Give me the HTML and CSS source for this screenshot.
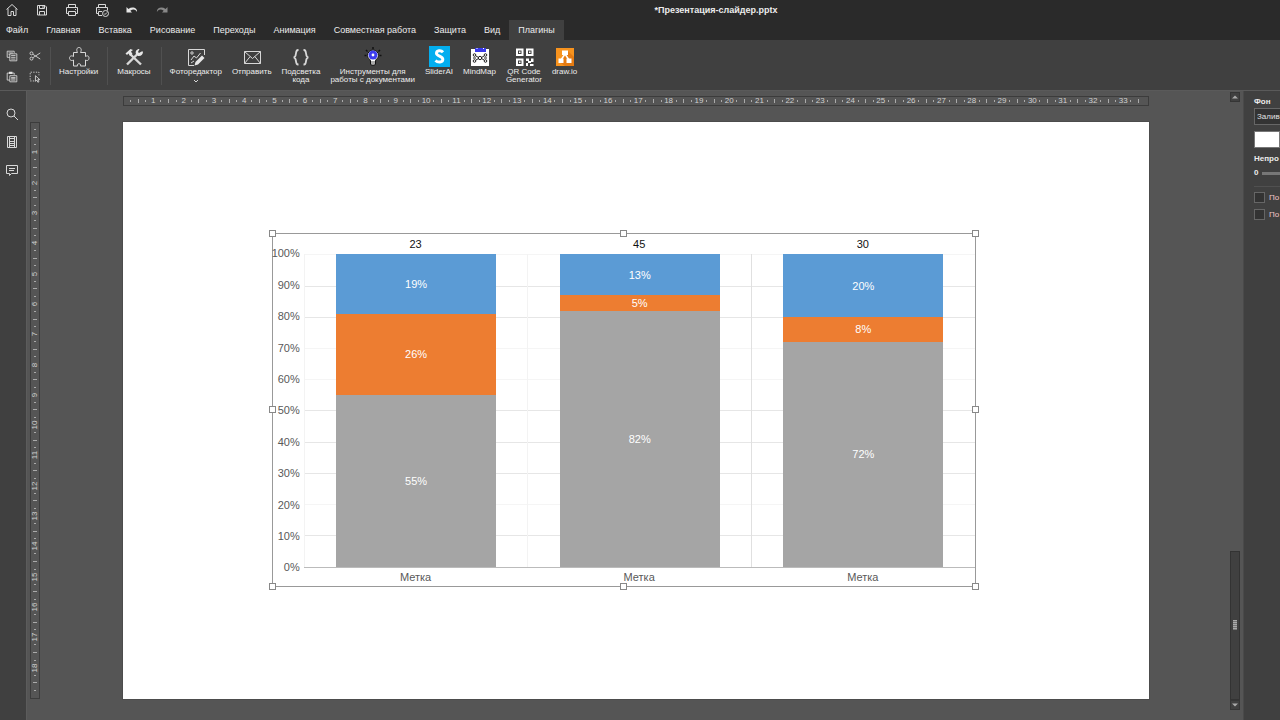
FILE: index.html
```html
<!DOCTYPE html>
<html lang="ru">
<head>
<meta charset="utf-8">
<title>Презентация-слайдер.pptx</title>
<link rel="stylesheet" href="styles.css">
</head>
<body>
<header class="titlebar">
  <div class="quick">
    <button aria-label="Домой"><svg viewBox="0 0 16 16"><path d="M2.5 7.5 8 2.5l5.500 5M4 6.500V13.500h3V9.500h2.500v4H12V6.500"/></svg></button>
    <button aria-label="Сохранить"><svg viewBox="0 0 16 16"><path d="M3.500 3.500h7.500l1.500 1.500v8h-9zM5.500 3.500v3h5v-3M5.500 13V9.500h5V13M9 4v2"/></svg></button>
    <button aria-label="Печать"><svg viewBox="0 0 16 16"><path d="M4.500 5.500v-3h7v3M4.500 11.500h-2v-6h11v6h-2M4.500 9.500h7v4h-7zM11 7.500h1"/></svg></button>
    <button aria-label="Быстрая печать"><svg viewBox="0 0 16 16"><path d="M4.500 5.500v-3h7v3M4.500 11.500h-2v-6h11v3M8 9.500H4.500v4H8M4.500 7.500h1"/><circle cx="11.500" cy="11.500" r="3"/><path d="m10 11.500 1 1 2-2"/></svg></button>
    <button aria-label="Отменить"><svg viewBox="0 0 16 16"><path class="solid" d="M2.500 5v5.500H8L6.300 8.700C9 6.700 12 7.200 13 10c.8-4-4.500-6-8.600-3.100z"/></svg></button>
    <button aria-label="Повторить" class="muted"><svg viewBox="0 0 16 16"><path class="solid" d="M13.500 5v5.500H8l1.700-1.800C7 6.700 4 7.200 3 10c-.8-4 4.500-6 8.600-3.100z"/></svg></button>
  </div>
  <h1>*Презентация-слайдер.pptx</h1>
</header>
<nav class="tabs">
  <button>Файл</button><button>Главная</button><button>Вставка</button><button>Рисование</button><button>Переходы</button><button>Анимация</button><button>Совместная работа</button><button>Защита</button><button>Вид</button><button class="active">Плагины</button>
</nav>
<section class="toolbar">
  <div class="clip">
    <button aria-label="Копировать"><svg viewBox="0 0 16 16"><path d="M5.500 9.500h-3v-7h8v2M4 4.500h5M4 6.500h1.500M5.500 5.500h8v8h-8zM7 7.500h5M7 9.500h5M7 11.500h5"/></svg></button>
    <button aria-label="Вырезать"><svg viewBox="0 0 16 16"><circle cx="4" cy="5" r="1.700"/><circle cx="4" cy="11" r="1.700"/><path d="M5.500 6 14 11.500M5.500 10 14 4.500"/></svg></button>
    <button aria-label="Вставить"><svg viewBox="0 0 16 16"><path d="M5.500 11.500h-3v-8h8v2M5 3h3M5.500 6.500h8v7h-8zM7 8.500h5M7 10h5M7 11.500h5"/><path class="solid" d="M4.500 2h4v2.500h-4z"/></svg></button>
    <button aria-label="Выделить"><svg viewBox="0 0 16 16"><path stroke-dasharray="1.500 1.500" d="M7 12.500H2.500v-10h10V6"/><path d="M8.500 6.500v6.500l1.500-1.500 1.300 2.500 1.200-.6-1.300-2.400h2.300z"/></svg></button>
  </div>
  <div class="group">
    <button class="tool"><svg class="ico" viewBox="0 0 22 22"><path d="M5.500 6.500h4C8 3.500 9 1.500 11 1.500s3 2 1.500 5h5v4c2.500-1.500 3.500 0 3.500 1.500s-1 3.500-3.500 2v6h-5c1.500-3-4.500-3-3 0h-4v-6c-2.500 1.500-4-.5-4-2s1.500-3 4-1.500v-4z"/></svg><span>Настройки</span></button>
  </div>
  <div class="group wide">
    <button class="tool"><svg class="ico" viewBox="0 0 22 22"><path stroke-width="2.400" d="M4 18.500 14.500 8M7 8l11 10.500"/><path class="solid" d="M2.500 7.500 7.500 3l2.500 1-2 1.500 1.500 2.500L7 10 5.500 7.500 4 9zM18.500 5.500l-2.500 1.500-1-1 1.500-3c-3 0-4.500 2.500-3.500 5l2 2c3 .5 5.200-1.500 5-4.500z"/></svg><span>Макросы</span></button>
  </div>
  <div class="group">
    <button class="tool"><svg class="ico" viewBox="0 0 22 22"><path d="M9 19.500H3.500v-16h16V9M6 14l3-4 2.500 2 4-5M6 17l3-2"/><circle cx="7" cy="7" r="1.200"/><path class="solid" d="m9.500 19.500 1-3.500 6.500-6.500 2.500 2.500-6.500 6.500z"/></svg><span>Фоторедактор</span><svg class="caret" viewBox="0 0 6 6"><path d="m1 2 2 2 2-2"/></svg></button>
    <button class="tool"><svg class="ico" viewBox="0 0 22 22"><path d="M3.500 5.500h16v12h-16zM3.500 5.500l8 7 8-7M3.500 17.500l5.700-7M19.500 17.500l-5.700-7"/></svg><span>Отправить</span></button>
    <button class="tool"><svg class="ico" viewBox="0 0 22 22"><path stroke-width="1.800" d="M8.500 4H8C4.500 4 7.500 11.300 3.500 11.300 7.500 11.300 4.500 18.500 8 18.500h.5M13.500 4h.5c3.500 0 .5 7.300 4.500 7.300-4 0-1 7.200-4.500 7.200h-.5"/></svg><span>Подсветка<br>кода</span></button>
    <button class="tool"><svg class="ico" viewBox="0 0 22 22"><path stroke="#111" stroke-width="1.500" d="M11 1v2M4 4l1.500 1.500M18 4l-1.500 1.500M2.500 9.500h2M17.500 9.500h2"/><path fill="#fff" stroke="#111" d="M8.500 15c0-1.800-3-2.500-3-5.500a5.500 5.500 0 0 1 11 0c0 3-3 3.700-3 5.500v3.500l-2.500 1-2.500-1z"/><circle cx="11" cy="9" r="4.500" fill="#3c3cf0" stroke="none"/><circle cx="11" cy="9" r="1.400" fill="#fff" stroke="none"/><path stroke="#555" d="M9 16h4M9 18h4"/></svg><span>Инструменты для<br>работы с документами</span></button>
    <button class="tool"><svg class="ico" viewBox="0 0 22 22"><path fill="#03aeef" stroke="none" d="M1 0h21v21H1z"/><path stroke="#fff" stroke-width="3" d="M15 6.200C13 4 8.500 4.300 8.500 7.300c0 3.200 6.300 2.500 6.300 6 0 3.500-5 3.500-7.300 1.200"/></svg><span>SliderAI</span></button>
    <button class="tool"><svg class="ico" viewBox="0 0 22 22"><path fill="#fff" stroke="none" d="M3 3h18v17H3z"/><path fill="#3939e8" stroke="none" d="M7 2h11v4H7z"/><path fill="#fff" stroke="none" d="M8.500 2h1v1h-1zM15 2h1v1h-1z"/><g stroke="#222"><circle cx="12" cy="12" r="1.700"/><circle cx="6.500" cy="9" r="1.300"/><circle cx="6.500" cy="15" r="1.300"/><circle cx="17.500" cy="9" r="1.300"/><circle cx="17.500" cy="15" r="1.300"/><path d="m8 10 2.500 1.500M8 14l2.500-1.500M16 10l-2.500 1.500M16 14l-2.500-1.500M5 12h3M16 12h3"/></g></svg><span>MindMap</span></button>
    <button class="tool"><svg class="ico" viewBox="0 0 22 22"><path stroke="#fff" stroke-width="2" d="M4 3.500h5.500V9H4zM14 3.500h5.500V9H14zM4 13.500h5.500V19H4z"/><path fill="#fff" stroke="none" d="M6 5.500h1.500V7H6zM16 5.500h1.500V7H16zM6 15.500h1.500V17H6zM13 12.500h3V15h-3zM18 12.500h2.500V16H18zM15 15h3v2h-3zM13 17h2v3h-2zM17 18h3.500v2H17z"/></svg><span>QR Code<br>Generator</span></button>
    <button class="tool"><svg class="ico" viewBox="0 0 22 22"><path fill="#f7931e" stroke="none" d="M2 2h18v18H2z"/><path fill="#e57b12" stroke="none" d="m14 5 6 6v9h-9l-6-4z"/><path stroke="#fff" stroke-width="1.500" d="m11 8-4 6M11 8l4 6"/><path fill="#fff" stroke="none" d="M8 4.500h6V9H8zM4.500 12.500h5V17h-5zM12.500 12.500h5V17h-5z"/></svg><span>draw.io</span></button>
  </div>
</section>
<main class="main">
  <aside class="leftbar">
    <button aria-label="Поиск"><svg viewBox="0 0 16 16"><circle cx="7" cy="7" r="4"/><path d="m10 10 4 4"/></svg></button>
    <button aria-label="Слайды"><svg viewBox="0 0 16 16"><path d="M3.500 2.500h9v11h-9zM5.500 3v10M10.500 3v10M5.500 4.500h5v3h-5zM5.500 9.500h5v2h-5z"/></svg></button>
    <button aria-label="Комментарии"><svg viewBox="0 0 16 16"><path d="M2.500 3.500h11v8h-6l-2 2v-2h-3zM5 6.500h6M5 8.500h5"/></svg></button>
  </aside>
  <section class="workspace">
    <div class="ruler ruler-h" data-steps="135"></div>
    <div class="ruler ruler-v" data-steps="76"></div>
    <div class="slide">
      <figure class="chart">
        <div class="yaxis"><span>100%</span><span>90%</span><span>80%</span><span>70%</span><span>60%</span><span>50%</span><span>40%</span><span>30%</span><span>20%</span><span>10%</span><span>0%</span></div>
        <div class="totals"><span>23</span><span>45</span><span>30</span></div>
        <div class="plot">
          <div class="lines"><i class="faint"></i><i></i><i></i><i class="faint"></i><i class="faint"></i><i></i><i></i><i></i><i class="faint"></i><i></i></div>
          <div class="col"><div class="bar"><div class="blue" style="height:19%">19%</div><div class="orange" style="height:26%">26%</div><div class="gray" style="height:55%">55%</div></div></div>
          <div class="col"><div class="bar"><div class="blue" style="height:13%">13%</div><div class="orange" style="height:5%">5%</div><div class="gray" style="height:82%">82%</div></div></div>
          <div class="col strong"><div class="bar"><div class="blue" style="height:20%">20%</div><div class="orange" style="height:8%">8%</div><div class="gray" style="height:72%">72%</div></div></div>
        </div>
        <div class="cats"><span>Метка</span><span>Метка</span><span>Метка</span></div>
        <b class="h n w"></b><b class="h n c"></b><b class="h n e"></b><b class="h m w"></b><b class="h m e"></b><b class="h s w"></b><b class="h s c"></b><b class="h s e"></b>
      </figure>
    </div>
    <div class="scroll">
      <button aria-label="Вверх"><svg viewBox="0 0 8 8"><path d="M1 5.500h6L4 2.500z"/></svg></button>
      <div class="track"><div class="thumb"><i></i></div></div>
      <button aria-label="Вниз"><svg viewBox="0 0 8 8"><path d="M1 2.500h6L4 5.500z"/></svg></button>
    </div>
  </section>
  <aside class="props">
    <label class="head" for="fill">Фон</label>
    <select id="fill"><option>Залив</option></select>
    <button class="swatch" aria-label="Цвет"></button>
    <label class="head" for="opacity">Непро</label>
    <div class="range"><span>0</span><input id="opacity" type="range" value="100"></div>
    <hr>
    <label class="check"><input type="checkbox">По</label>
    <label class="check"><input type="checkbox">По</label>
  </aside>
</main>
<script src="rulers.js"></script>
</body>
</html>
```

FILE: styles.css
```css
* { box-sizing: border-box; }
body {
  margin: 0;
  height: 100vh;
  display: flex;
  flex-direction: column;
  overflow: hidden;
  background: #555;
  color: #ececec;
  font: 9px/10px "Liberation Sans", Arial, sans-serif;
}
button { border: 0; padding: 0; background: none; color: inherit; font: inherit; }
svg { display: block; width: 16px; height: 16px; fill: none; stroke: #d8d8d8; stroke-width: 1; }
.solid { fill: #e6e6e6; stroke: none; }

.titlebar { display: flex; align-items: center; height: 20px; flex: none; background: #2a2a2a; padding-right: 18px; }
.quick { display: flex; gap: 14px; padding-left: 4px; }
.muted { opacity: .5; }
.titlebar h1 { flex: 1; margin: 0; text-align: center; font-size: 9px; font-weight: 700; }

.tabs { display: flex; height: 20px; flex: none; background: #2a2a2a; }
.tabs button { padding: 0 9px; white-space: nowrap; }
.tabs button:first-child { padding-left: 6px; }
.tabs .active { background: #404040; }

.toolbar { display: flex; height: 51px; flex: none; background: #404040; border-bottom: 1px solid #5a5a5a; font-size: 8px; line-height: 8px; }
.clip { display: grid; grid-template-columns: 16px 16px; gap: 5px 7px; align-content: start; padding: 8px 6px 0 5px; }
.clip svg { width: 14px; height: 14px; }
.clip button { height: 16px; }
.group { display: flex; gap: 10px; align-items: flex-start; padding: 6px 9px 0; position: relative; }
.group.wide { padding: 6px 10px 0; }
.group::before { content: ""; position: absolute; left: 0; top: 7px; height: 38px; width: 1px; background: #505050; }
.tool { display: flex; flex-direction: column; align-items: center; white-space: nowrap; }
.ico { width: 22px; height: 22px; }
.caret { width: 6px; height: 6px; margin-top: 2px; }

.main { display: flex; flex: 1; min-height: 0; }
.leftbar { width: 27px; flex: none; background: #404040; border-right: 1px solid #5c5c5c; display: flex; flex-direction: column; align-items: center; gap: 12px; padding: 15px 2px 0 0; }

.workspace {
  flex: 1;
  min-width: 0;
  display: grid;
  grid-template-columns: 12px 1fr 10px;
  grid-template-rows: 10px auto 1fr;
  column-gap: 81px;
  row-gap: 16px;
  padding: 5px 3px 0 3px;
}
.ruler { display: flex; box-shadow: inset 0 0 0 1px #3c3c3c; background: #555; color: #d0d0d0; font-size: 8px; line-height: 8px; }
.ruler span { flex: 2 1 0; min-width: 0; min-height: 0; display: flex; align-items: center; justify-content: center; }
.ruler .start { flex-grow: 1; }
.ruler i { flex: none; width: 1px; height: 2px; background: #aaa; }
.ruler b { font-weight: 400; flex: none; }
.ruler .half i { height: 4px; }
.ruler-h { grid-area: 1 / 2; }
.ruler-v { grid-area: 2 / 1; flex-direction: column; width: 10px; }
.ruler-v .end { flex-grow: 1.4; }
.ruler-v b { transform: rotate(-90deg); }
.ruler-v i { width: 2px; height: 1px; }
.ruler-v .half i { width: 4px; height: 1px; }

.slide { grid-area: 2 / 2; aspect-ratio: 16 / 9; background: #fff; position: relative; outline: 1px solid #4c4c4c; }
.chart {
  position: absolute;
  left: 14.5%;
  top: 19.3%;
  width: 68.6%;
  height: 61.2%;
  margin: 0;
  border: 1px solid #999;
  display: grid;
  grid-template-columns: 31px 1fr;
  grid-template-rows: 20px 1fr 18px;
  color: #595959;
  font-size: 11px;
  line-height: 12px;
}
.yaxis { grid-area: 2 / 1; display: flex; flex-direction: column; justify-content: space-between; align-items: flex-end; margin: -7px 4px -6px -4px; }
.totals, .cats { grid-column: 2; display: grid; grid-template-columns: repeat(3, 1fr); align-items: center; text-align: center; }
.totals { grid-row: 1; color: #111; }
.cats { grid-row: 3; }
.plot { grid-area: 2 / 2; display: grid; grid-template-columns: repeat(3, 1fr); border-bottom: 1px solid #bbb; position: relative; }
.lines { position: absolute; inset: 0; display: flex; flex-direction: column; }
.lines i { flex: 1; border-top: 1px solid #e6e6e6; }
.lines .faint { border-color: #f5f5f5; }
.col { position: relative; border-left: 1px solid #f3f3f3; display: flex; justify-content: center; }
.col.strong { border-color: #e0e0e0; }
.bar { width: 72%; color: #fff; }
.bar div { display: flex; align-items: center; justify-content: center; }
.blue { background: #5b9bd5; }
.orange { background: #ed7d31; }
.gray { background: #a5a5a5; }
.h { position: absolute; width: 7px; height: 7px; background: #fff; border: 1px solid #888; }
.n { top: -4px; }
.m { top: calc(50% - 4px); }
.s { bottom: -4px; }
.w { left: -4px; }
.c { left: calc(50% - 4px); }
.e { right: -4px; }

.scroll { grid-area: 1 / 3 / 4 / 4; display: flex; flex-direction: column; margin: -4px 0 10px; }
.scroll button { height: 10px; flex: none; background: #404040; border: 1px solid #353535; }
.scroll svg { width: 8px; height: 8px; fill: #aaa; stroke: none; }
.track { flex: 1; display: flex; align-items: flex-end; }
.thumb { flex: 1; height: 25%; background: #404040; border: 1px solid #333; display: flex; align-items: center; justify-content: center; }
.thumb i { width: 4px; height: 10px; background: repeating-linear-gradient(#aaa 0 1px, #777 1px 2px); }

.props { width: 37px; flex: none; overflow: hidden; background: #404040; border-left: 1px solid #4a4a4a; padding: 6px 0 0 10px; display: flex; flex-direction: column; align-items: flex-start; font-size: 8px; }
.head { font-weight: 700; }
.props select { appearance: none; width: 80px; height: 17px; margin: 1px 0 6px; padding: 0 2px; border: 1px solid #666; border-radius: 0; background: #333; color: #e2e2e2; font: inherit; }
.swatch { width: 26px; height: 17px; margin-bottom: 6px; flex: none; background: #fff; border: 1px solid #777; }
.range { display: flex; align-items: center; gap: 4px; margin-top: 4px; font-weight: 700; }
.range input { appearance: none; width: 80px; height: 3px; margin: 0; background: #777; }
.range input::-webkit-slider-thumb { appearance: none; width: 7px; height: 9px; background: transparent; }
.props hr { width: 80px; margin: 8px 0 2px; border: 0; border-top: 1px solid #505050; }
.check { display: flex; align-items: center; gap: 4px; height: 17px; color: #f0c8c8; white-space: nowrap; }
.check input { appearance: none; width: 11px; height: 11px; margin: 0; flex: none; background: #333; border: 1px solid #666; }
```

FILE: rulers.js
```js
// Fills each ruler with quarter-unit marks: dot, dash, dot, number.
document.querySelectorAll('.ruler').forEach(function (ruler) {
  var steps = Number(ruler.dataset.steps);
  var html = '<span class="start"></span>';
  for (var k = 1; k < steps; k++) {
    if (k % 4 === 0) html += '<span><b>' + k / 4 + '</b></span>';
    else html += '<span class="' + (k % 2 ? 'quarter' : 'half') + '"><i></i></span>';
  }
  ruler.innerHTML = html + '<span class="end"></span>';
});
```
